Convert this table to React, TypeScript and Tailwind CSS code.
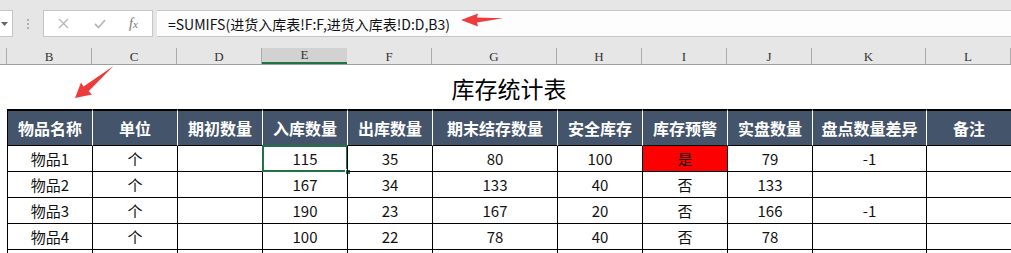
import React from "react";

const COLS = "grid grid-cols-[7px_85px_85px_85px_85px_85px_125px_85px_85px_85px_114px_85px]";
const letters = ["B", "C", "D", "E", "F", "G", "H", "I", "J", "K", "L"];
const headers = ["物品名称", "单位", "期初数量", "入库数量", "出库数量", "期末结存数量", "安全库存", "库存预警", "实盘数量", "盘点数量差异", "备注"];
const rows: string[][] = [
  ["物品1", "个", "", "115", "35", "80", "100", "是", "79", "-1", ""],
  ["物品2", "个", "", "167", "34", "133", "40", "否", "133", "", ""],
  ["物品3", "个", "", "190", "23", "167", "20", "否", "166", "-1", ""],
  ["物品4", "个", "", "100", "22", "78", "40", "否", "78", "", ""],
  ["", "", "", "", "", "", "", "", "", "", ""],
];

export default function App() {
  return (
    <div className="relative w-[1011px] h-[253px] overflow-hidden bg-white font-['Noto_Sans_CJK_SC','Noto_Sans',sans-serif] text-[#111]">
      {/* Formula bar */}
      <div className="h-[37px] bg-[#e6e6e6] pt-[10px] flex items-start">
        <div className="w-[13px] h-[27px] bg-white border border-l-0 border-[#c6c6c6] flex items-center pl-[1px]">
          <svg width="7" height="4" viewBox="0 0 7 4"><polygon points="0,0 7,0 3.5,4" fill="#666" /></svg>
        </div>
        <div className="w-[30px] h-[27px] flex items-center justify-center">
          <div className="flex flex-col gap-[2px]">
            <div className="w-[2px] h-[2px] bg-[#b0b0b0]" />
            <div className="w-[2px] h-[2px] bg-[#b0b0b0]" />
            <div className="w-[2px] h-[2px] bg-[#b0b0b0]" />
          </div>
        </div>
        <div className="w-[110px] h-[27px] bg-white border border-[#c6c6c6] flex items-center">
          <svg className="ml-[14px]" width="11" height="11" viewBox="0 0 11 11"><path d="M1 1 L10 10 M10 1 L1 10" stroke="#b8b8b8" strokeWidth="1.4" /></svg>
          <svg className="ml-[25px]" width="12" height="10" viewBox="0 0 12 10"><path d="M1 5 L4.5 8.5 L11 1" stroke="#b8b8b8" strokeWidth="1.8" fill="none" /></svg>
          <span className="ml-[23px] font-['Liberation_Serif',serif] italic text-[14px] text-[#777] leading-none">f<span className="text-[11px]">x</span></span>
        </div>
        <div className="ml-[4px] flex-1 h-[27px] bg-[#fdfdfd] border-y border-[#c6c6c6] flex items-center pl-[11px] text-[14px] leading-none text-[#111]">
          =SUMIFS(进货入库表!F:F,进货入库表!D:D,B3)
        </div>
      </div>

      {/* Column letters */}
      <div className="h-[28px] bg-[#e6e6e6] pt-[11px]">
        <div className={`${COLS} h-[17px] border-b border-[#9f9f9f]`}>
          <div className="border-r border-[#ababab]" />
          {letters.map((l) => (
            <div
              key={l}
              className={`flex items-end justify-center font-['Liberation_Serif',serif] text-[13px] leading-none pb-[1px] text-[#333] ${
                l === "E" ? "bg-[#d2d2d2] border-b-2 border-[#217346]" : "border-r border-[#ababab]"
              }`}
            >
              {l}
            </div>
          ))}
        </div>
      </div>

      {/* Title row */}
      <div className={`${COLS} h-[44px]`}>
        <div />
        <div className="col-span-11 flex items-center justify-center text-[23px] leading-none pt-[2px] text-black">库存统计表</div>
      </div>

      {/* Header row */}
      <div className={`${COLS} h-[37px]`}>
        <div />
        {headers.map((h, i) => (
          <div
            key={h}
            className={`bg-[#44546a] border-t-2 border-b border-t-black border-b-black flex items-center justify-center text-white font-bold text-[16px] leading-none ${
              i === 0 ? "border-l border-l-black" : "border-l border-l-white"
            }`}
          >
            {h}
          </div>
        ))}
      </div>

      {/* Data rows */}
      {rows.map((r, ri) => (
        <div key={ri} className={`${COLS} h-[26px]`}>
          <div />
          {r.map((c, ci) => (
            <div
              key={ci}
              className={`relative border-l border-b border-black flex items-center justify-center text-[15px] leading-none ${
                ri === 0 && ci === 7 ? "bg-[#ff0000]" : ""
              }`}
            >
              {c}
              {ri === 0 && ci === 3 && (
                <>
                  <div className="absolute left-[-1px] top-[-1px] right-[-1px] bottom-[-1px] border-2 border-[#217346]" />
                  <div className="absolute right-[-4px] bottom-[-4px] w-[6px] h-[6px] bg-[#217346] border border-white" />
                </>
              )}
            </div>
          ))}
        </div>
      ))}

      {/* Red arrows overlay */}
      <svg className="absolute left-0 top-0 pointer-events-none" width="1011" height="253" viewBox="0 0 1011 253">
        <polygon points="461,20 478,13.5 477,17.6 503,18.3 477,22.4 478,26.5" fill="#ee3b3b" />
        <polygon points="75,98 92,94.5 88.6,91.2 113.5,66 83.5,86.5 81,82.5" fill="#ee3b3b" />
      </svg>
    </div>
  );
}
